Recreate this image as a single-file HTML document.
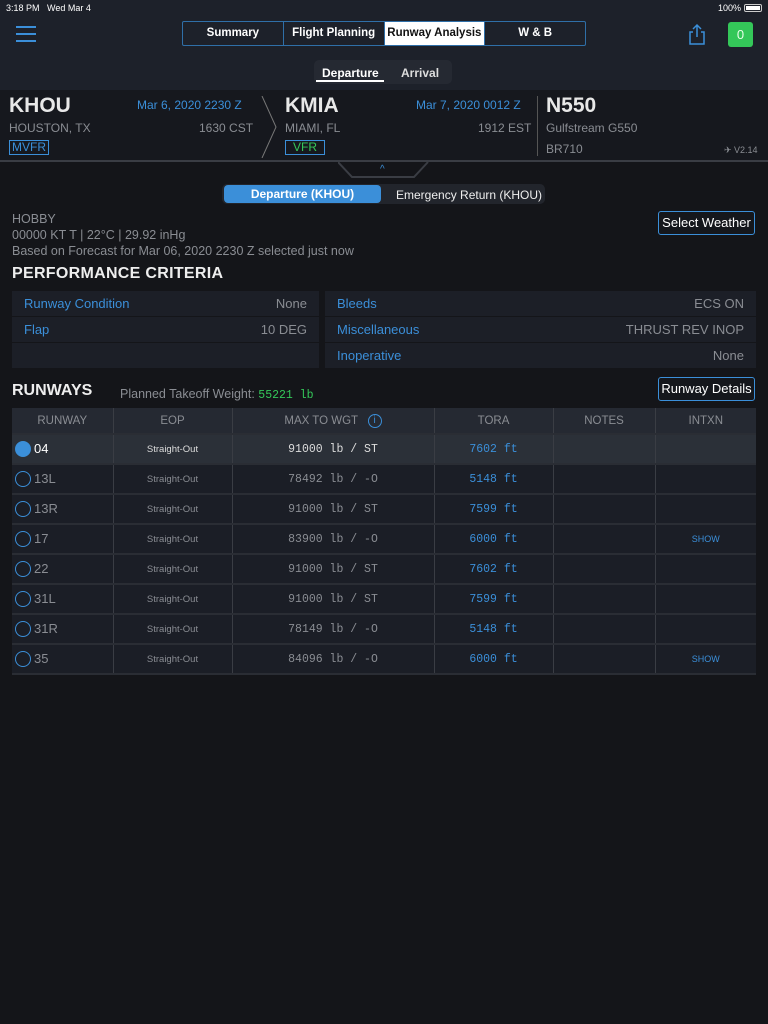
<!DOCTYPE html>
<html><head><meta charset="utf-8"><style>
*{box-sizing:border-box;margin:0;padding:0}
body{width:768px;height:1024px;background:#141519;font-family:"Liberation Sans",sans-serif;position:relative;overflow:hidden;color:#ddd}
.a{position:absolute}
.top{left:0;top:0;width:768px;height:90px;background:#1d212a}
.seg{top:21px;left:182px;width:404px;height:25px;border:1px solid #2f6fa8;display:flex;border-radius:2px}
.seg div{flex:1;text-align:center;font-size:11.5px;font-weight:bold;line-height:23px;color:#fff;border-right:1px solid #2f6fa8}
.seg div:last-child{border-right:none}
.seg .on{background:#fff;color:#111}
.band{left:0;top:90px;width:768px;height:72px;background:#16181e;border-bottom:2px solid #3a3d44}
.big{font-size:21px;font-weight:bold;color:#e8e8e8}
.gray{color:#8a8d93;font-size:12px}
.blue{color:#3b8fd9}
.crit{background:#1c1f27;height:25px;font-size:13px;line-height:25px;padding:0 12px}
.crit .r{float:right;color:#8a8d93}
table{border-collapse:collapse;position:absolute;left:12px;top:408px;width:744px}
td,th{border-left:1px solid #3a3d44;height:30px;font-size:11px;text-align:center;color:#8a8d93;vertical-align:middle}
td:first-child,th:first-child{border-left:none;text-align:left;font-size:13px}
th{height:26px;font-weight:normal;background:#252932;font-size:11.5px}
th:first-child{text-align:center;font-size:11.5px}
tr{background:#1b1e26;border-bottom:2px solid #2a2d34}
tr.sel{background:#2b3038}
.m{font-family:"Liberation Mono",monospace;font-size:11.5px}
.c{display:inline-block;width:16px;height:16px;border:1.5px solid #3b8fd9;border-radius:50%;vertical-align:middle;margin:0 3px 0 3px}
.btn{border:1px solid #3b8fd9;border-radius:3px;color:#fff;font-size:13px;text-align:center;line-height:22px;background:#15171c}
</style></head><body>
<div class="a top"></div>
<div class="a" style="left:6px;top:3px;font-size:9px;color:#fff">3:18 PM&nbsp;&nbsp;&nbsp;Wed Mar 4</div>
<div class="a" style="left:718px;top:3px;font-size:9px;color:#fff">100%</div>
<div class="a" style="left:744px;top:4px;width:18px;height:8px;border:1px solid #ccc;border-radius:2px;padding:1px"><div style="background:#fff;height:100%"></div></div>
<div class="a" style="left:16px;top:26px;width:20px">
<div style="height:2px;background:#3b8fd9;margin-bottom:5px"></div><div style="height:2px;background:#3b8fd9;margin-bottom:5px"></div><div style="height:2px;background:#3b8fd9"></div></div>
<div class="a seg"><div>Summary</div><div>Flight Planning</div><div class="on">Runway Analysis</div><div>W &amp; B</div></div>
<svg class="a" style="left:687px;top:23px" width="20" height="22" viewBox="0 0 20 22" fill="none" stroke="#3b8fd9" stroke-width="1.5"><path d="M6 9H3v12h14V9h-3M10 14V2M6 6l4-4 4 4"/></svg>
<div class="a" style="left:728px;top:22px;width:25px;height:25px;background:#34c759;border-radius:3px;color:#e8ffe8;text-align:center;line-height:25px;font-size:13px">0</div>
<div class="a" style="left:314px;top:60px;width:138px;height:24px;background:#252932;border-radius:5px"></div>
<div class="a" style="left:322px;top:66px;font-size:12px;font-weight:bold;color:#fff">Departure</div>
<div class="a" style="left:316px;top:80px;width:68px;height:2px;background:#fff"></div>
<div class="a" style="left:401px;top:66px;font-size:12px;font-weight:bold;color:#ddd">Arrival</div>
<div class="a band"></div>
<div class="a big" style="left:9px;top:94px">KHOU</div>
<div class="a blue" style="left:137px;top:98px;font-size:12px">Mar 6, 2020 2230 Z</div>
<div class="a gray" style="left:9px;top:121px">HOUSTON, TX</div>
<div class="a gray" style="left:199px;top:121px">1630 CST</div>
<div class="a blue" style="left:9px;top:140px;font-size:12px;border:1px solid #3b8fd9;padding:0 2px;line-height:13px">MVFR</div>
<svg class="a" style="left:258px;top:96px" width="22" height="62"><path d="M4 0L18 31L4 62" stroke="#777" fill="none"/></svg>
<div class="a big" style="left:285px;top:94px">KMIA</div>
<div class="a blue" style="left:416px;top:98px;font-size:12px">Mar 7, 2020 0012 Z</div>
<div class="a gray" style="left:285px;top:121px">MIAMI, FL</div>
<div class="a gray" style="left:478px;top:121px">1912 EST</div>
<div class="a" style="left:285px;top:140px;font-size:12px;color:#34c759;border:1px solid #3b8fd9;padding:0 7px;line-height:13px">VFR</div>
<div class="a" style="left:537px;top:96px;width:1px;height:60px;background:#555"></div>
<div class="a big" style="left:546px;top:94px">N550</div>
<div class="a gray" style="left:546px;top:121px">Gulfstream G550</div>
<div class="a gray" style="left:546px;top:142px">BR710</div>
<div class="a gray" style="left:724px;top:145px;font-size:9px">✈ V2.14</div>
<svg class="a" style="left:338px;top:161px" width="92" height="18"><path d="M0 1L14 16H76L90 1" stroke="#3a3d44" stroke-width="2" fill="#141519"/></svg>
<div class="a blue" style="left:380px;top:164px;font-size:10px">^</div>
<div class="a" style="left:222px;top:184px;width:323px;height:20px;background:#22252c;border-radius:5px"></div>
<div class="a" style="left:224px;top:185px;width:157px;height:18px;background:#3b8fd9;border-radius:4px;color:#fff;font-size:12px;font-weight:bold;text-align:center;line-height:18px">Departure (KHOU)</div>
<div class="a" style="left:396px;top:188px;font-size:12px;color:#eee">Emergency Return (KHOU)</div>
<div class="a gray" style="left:12px;top:211px;font-size:12.5px;line-height:16px">HOBBY<br>00000 KT T | 22°C | 29.92 inHg<br>Based on Forecast for Mar 06, 2020 2230 Z selected just now</div>
<div class="a btn" style="left:658px;top:211px;width:97px;height:24px">Select Weather</div>
<div class="a" style="left:12px;top:265px;font-size:16px;font-weight:bold;color:#eee;letter-spacing:.3px">PERFORMANCE CRITERIA</div>
<div class="a" style="left:12px;top:291px;width:307px">
<div class="crit" style="margin-bottom:1px"><span class="blue">Runway Condition</span><span class="r">None</span></div>
<div class="crit" style="margin-bottom:1px"><span class="blue">Flap</span><span class="r">10 DEG</span></div>
<div class="crit"></div></div>
<div class="a" style="left:325px;top:291px;width:431px">
<div class="crit" style="margin-bottom:1px"><span class="blue">Bleeds</span><span class="r">ECS ON</span></div>
<div class="crit" style="margin-bottom:1px"><span class="blue">Miscellaneous</span><span class="r">THRUST REV INOP</span></div>
<div class="crit"><span class="blue">Inoperative</span><span class="r">None</span></div></div>
<div class="a" style="left:12px;top:382px;font-size:16px;font-weight:bold;color:#eee">RUNWAYS</div>
<div class="a gray" style="left:120px;top:387px;font-size:12.5px">Planned Takeoff Weight: <span class="m" style="color:#34c759;font-size:11.5px">55221 lb</span></div>
<div class="a btn" style="left:658px;top:377px;width:97px;height:24px">Runway Details</div>
<table>
<tr><th style="width:101px">RUNWAY</th><th style="width:119px">EOP</th><th style="width:202px">MAX TO WGT&nbsp;&nbsp;&nbsp;<span style="display:inline-block;width:14px;height:14px;border:1px solid #3b8fd9;border-radius:50%;color:#3b8fd9;font-size:10px;line-height:12px;vertical-align:middle">i</span></th><th style="width:119px">TORA</th><th style="width:102px">NOTES</th><th>INTXN</th></tr>
<tr class="sel"><td><span class="c" style="background:#3b8fd9"></span><span style="color:#fff">04</span></td><td style="color:#ddd;font-size:9.5px">Straight-Out</td><td class="m" style="color:#ddd">91000 lb / ST</td><td class="m blue">7602 ft</td><td></td><td></td></tr>
<tr><td><span class="c"></span>13L</td><td style="font-size:9.5px">Straight-Out</td><td class="m">78492 lb / -O</td><td class="m blue">5148 ft</td><td></td><td></td></tr>
<tr><td><span class="c"></span>13R</td><td style="font-size:9.5px">Straight-Out</td><td class="m">91000 lb / ST</td><td class="m blue">7599 ft</td><td></td><td></td></tr>
<tr><td><span class="c"></span>17</td><td style="font-size:9.5px">Straight-Out</td><td class="m">83900 lb / -O</td><td class="m blue">6000 ft</td><td></td><td class="blue" style="font-size:9px">SHOW</td></tr>
<tr><td><span class="c"></span>22</td><td style="font-size:9.5px">Straight-Out</td><td class="m">91000 lb / ST</td><td class="m blue">7602 ft</td><td></td><td></td></tr>
<tr><td><span class="c"></span>31L</td><td style="font-size:9.5px">Straight-Out</td><td class="m">91000 lb / ST</td><td class="m blue">7599 ft</td><td></td><td></td></tr>
<tr><td><span class="c"></span>31R</td><td style="font-size:9.5px">Straight-Out</td><td class="m">78149 lb / -O</td><td class="m blue">5148 ft</td><td></td><td></td></tr>
<tr><td><span class="c"></span>35</td><td style="font-size:9.5px">Straight-Out</td><td class="m">84096 lb / -O</td><td class="m blue">6000 ft</td><td></td><td class="blue" style="font-size:9px">SHOW</td></tr>
</table>
</body></html>
